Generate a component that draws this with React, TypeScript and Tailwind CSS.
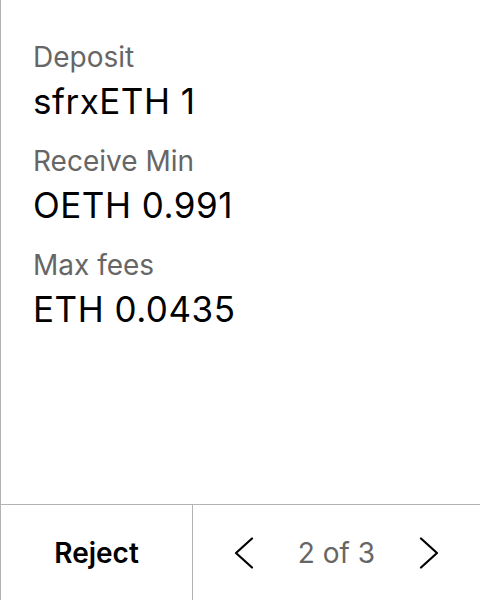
const rows = [
  { label: "Deposit", value: "sfrxETH 1" },
  { label: "Receive Min", value: "OETH 0.991" },
  { label: "Max fees", value: "ETH 0.0435" },
];

const Chevron = ({ dir }: { dir: "left" | "right" }) => (
  <svg width="20" height="32" viewBox="0 0 20 32" fill="none">
    <polyline
      points={dir === "left" ? "18,1.5 2,16 18,30.5" : "2,1.5 18,16 2,30.5"}
      stroke="#000"
      strokeWidth="2.2"
      strokeLinecap="round"
      strokeLinejoin="round"
    />
  </svg>
);

const App = () => {
  return (
    <div
      className="w-[480px] h-[600px] flex flex-col bg-white border-l border-[#b3b3b3] text-black"
      style={{ fontFamily: "Inter, 'Noto Sans', sans-serif" }}
    >
      <div className="flex-1 flex flex-col px-8 pt-[40px] gap-[23px]">
        {rows.map((r) => (
          <div key={r.label} className="flex flex-col gap-[7px]">
            <span className="text-[28px] leading-[34px] text-[#666666]">{r.label}</span>
            <span className="text-[35px] leading-[40px] tracking-[0.5px]">{r.value}</span>
          </div>
        ))}
      </div>
      <div className="h-[96px] flex border-t border-[#b3b3b3]">
        <button className="w-[192px] flex items-center justify-center text-[28px] font-semibold border-r border-[#b3b3b3]">
          Reject
        </button>
        <div className="flex-1 flex items-center justify-between px-[41px]">
          <Chevron dir="left" />
          <span className="text-[28px] text-[#666666]">2 of 3</span>
          <Chevron dir="right" />
        </div>
      </div>
    </div>
  );
};

export default App;
